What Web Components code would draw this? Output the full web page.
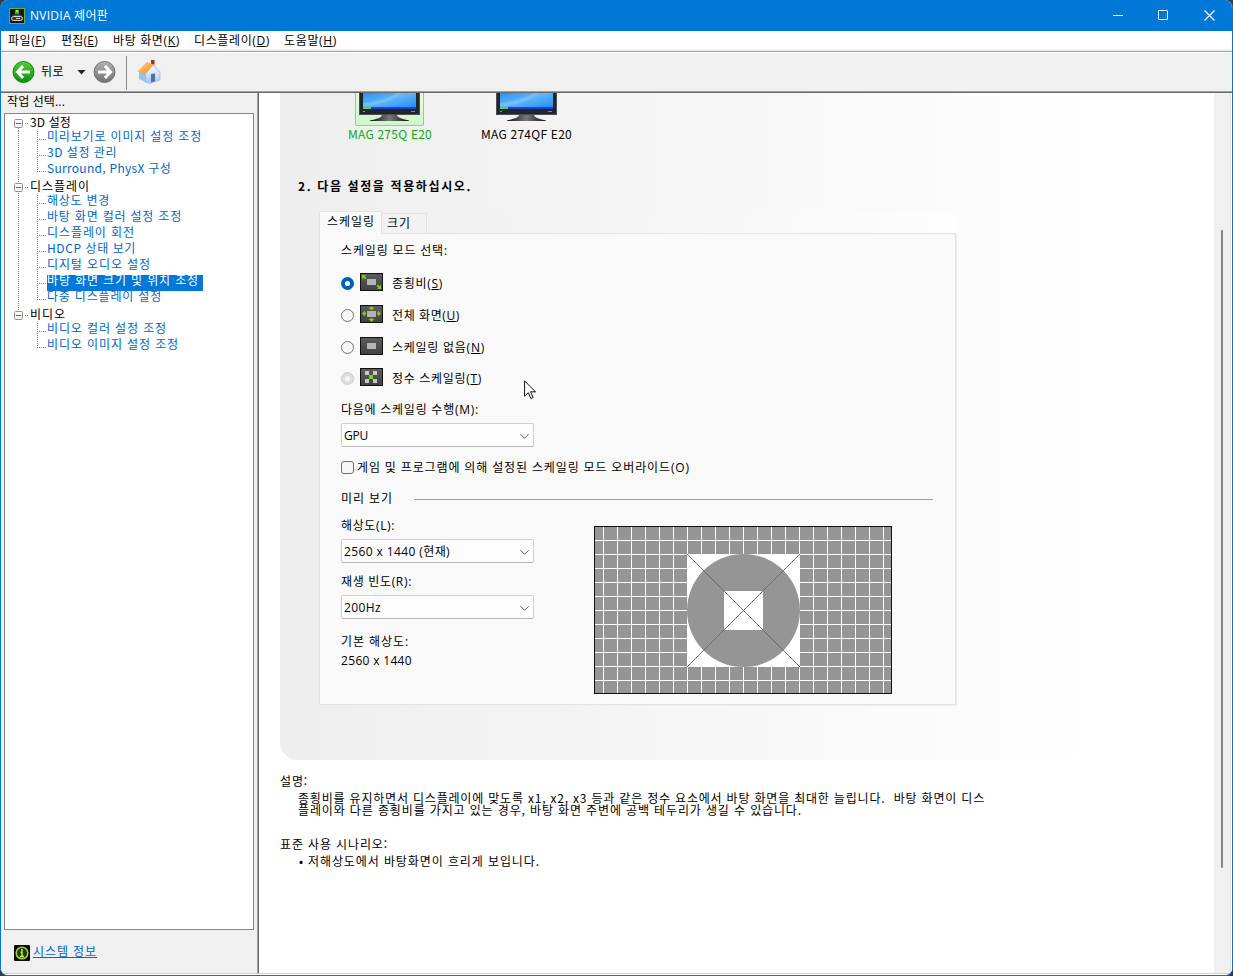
<!DOCTYPE html>
<html lang="ko">
<head>
<meta charset="utf-8">
<title>NVIDIA 제어판</title>
<style>
    html, body {
        margin: 0;
        height: 100%;
        overflow: hidden;
        background: #3a3a3a;
    }
    body {
        font-family: "Open Sans", "Noto Sans CJK KR", sans-serif;
        font-size: 12px;
        line-height: 16px;
        color: #000;
    }
</style>
</head>
<body>
<nv-window>
    <nv-titlebar slot="title"></nv-titlebar>
    <nv-menubar slot="menu"></nv-menubar>
    <nv-toolbar slot="toolbar"></nv-toolbar>
    <nv-sidebar slot="side"></nv-sidebar>
    <nv-content slot="main"></nv-content>
</nv-window>

<script>
class NvElement extends HTMLElement {
    constructor() {
        super();
        this.attachShadow({ mode: 'open' });
    }

    connectedCallback() {
        this.shadowRoot.innerHTML = this.render();
        this.ready();
    }

    render() {
        return '<slot></slot>';
    }

    ready() {}
}

// Text run that is tracked out (or in) to an exact width
class NvText extends NvElement {
    render() {
        return `
            <style>
                :host { display: block; flex: none; }
                span { display: block; width: max-content; white-space: pre; }
                ::slotted(u) { text-underline-offset: 1px; text-decoration-thickness: 1px; }
            </style>
            <span><slot></slot></span>
        `;
    }

    ready() {
        const width = Number(this.getAttribute('w'));
        const span = this.shadowRoot.querySelector('span');
        const natural = span.getBoundingClientRect().width;
        const count = this.textContent.length;
        this.style.width = `${width}px`;
        this.style.letterSpacing = `${(width - natural) / count}px`;
    }
}

class NvWindow extends NvElement {
    render() {
        return `
            <style>
                :host {
                    display: flex;
                    flex-direction: column;
                    box-sizing: border-box;
                    width: 1233px;
                    height: 976px;
                    border: solid #0078d7;
                    border-width: 0 1px 1px;
                    border-radius: 8px;
                    overflow: hidden;
                    background: #f0f0f0;
                }
                .body { display: flex; height: 880px; flex: none; }
                .foot { height: 1px; flex: none; background: #fff; border-top: 1px solid #d0d0d0; }
            </style>
            <slot name="title"></slot>
            <slot name="menu"></slot>
            <slot name="toolbar"></slot>
            <div class="body">
                <slot name="side"></slot>
                <slot name="main"></slot>
            </div>
            <div class="foot"></div>
        `;
    }
}

class NvTitlebar extends NvElement {
    render() {
        return `
            <style>
                :host {
                    display: flex;
                    align-items: center;
                    height: 31px;
                    flex: none;
                    padding-left: 8px;
                    background: #0078d7;
                    color: #fff;
                }
                nv-text { margin-left: 5px; }
                .buttons { display: flex; margin-left: auto; }
                .buttons svg { display: block; margin-right: 35px; }
                .buttons svg:nth-child(2) { margin-right: 36px; }
                .buttons svg:last-child { margin-right: 17px; }
            </style>
            <svg width="16" height="16" viewBox="0 0 16 16">
                <rect x=".5" y=".5" width="15" height="15" fill="#161816" stroke="#76a832"/>
                <path d="M3 8 5 6.500h6L13 8z" fill="#2f6f1a"/>
                <rect x="6" y="2" width="4" height="4" fill="#4cae18"/>
                <rect x="7" y="2" width="2" height="2" fill="#9af04e"/>
                <rect x="2.500" y="8.500" width="11" height="4" rx="2" fill="#3a3e3a" stroke="#d8d8d8"/>
                <path d="M7 10.500h4" stroke="#d0d0d0"/>
            </svg>
            <nv-text w="78">NVIDIA 제어판</nv-text>
            <div class="buttons">
                <svg width="10" height="11"><path d="M0 5.500h10" stroke="#fff"/></svg>
                <svg width="10" height="11"><rect x=".5" y=".5" width="9" height="9" rx=".5" fill="none" stroke="#fff"/></svg>
                <svg width="11" height="11"><path d="m.5 .5 10 10m0-10-10 10" stroke="#fff" stroke-width="1.200"/></svg>
            </div>
        `;
    }
}

class NvMenubar extends NvElement {
    render() {
        const items = [
            ['파일', 'F', 38, 15],
            ['편집', 'E', 37, 15],
            ['바탕 화면', 'K', 67, 14],
            ['디스플레이', 'D', 76, 14],
            ['도움말', 'H', 53, 0]
        ];
        return `
            <style>
                :host {
                    display: flex;
                    box-sizing: border-box;
                    height: 22px;
                    flex: none;
                    padding: 2px 0 0 7px;
                    background: linear-gradient(#fff 18px, #f0f0f0 18px 20px, #a0a0a0 20px 21px, #fff 21px);
                }
            </style>
            ${items.map(([text, key, w, gap]) => `<nv-text w="${w}" style="margin-right: ${gap}px">${text}(<u>${key}</u>)</nv-text>`).join('')}
        `;
    }
}

class NvToolbar extends NvElement {
    arrow(id, light, dark, flip) {
        return `
            <svg width="23" height="23" viewBox="0 0 23 23">
                <defs>
                    <linearGradient id="${id}" x2="0" y2="1">
                        <stop offset="0" stop-color="${light}"/>
                        <stop offset="1" stop-color="${dark}"/>
                    </linearGradient>
                </defs>
                <circle cx="11.500" cy="11" r="10.500" fill="url(#${id})" stroke="${dark}"/>
                <path d="M11 5 5.500 11 11 17M6 11h12" fill="none" stroke="#fff" stroke-width="3"
                    ${flip ? 'transform="matrix(-1 0 0 1 23 0)"' : ''}/>
            </svg>
        `;
    }

    render() {
        return `
            <style>
                :host {
                    display: flex;
                    align-items: center;
                    box-sizing: border-box;
                    height: 40px;
                    flex: none;
                    padding-left: 11px;
                    background: #f0f0f0;
                    border-bottom: 1px solid #696969;
                    box-shadow: inset 0 -1px #a0a0a0;
                }
                svg { display: block; flex: none; }
                nv-text { margin: -2px 0 0 6px; }
                .drop { margin: 0 7px 0 13px; }
                .sep { width: 1px; height: 34px; margin: 0 10px 0 10px; background: #8a8a8a; }
                .home { margin-top: -2px; }
            </style>
            ${this.arrow('back', '#52cf38', '#108c0c', false)}
            <nv-text w="23">뒤로</nv-text>
            <svg class="drop" width="9" height="5"><path d="M.5 0h8l-4 4.500z" fill="#222"/></svg>
            ${this.arrow('next', '#b4b4b4', '#727272', true)}
            <div class="sep"></div>
            <svg class="home" width="24" height="24" viewBox="0 0 24 24">
                <defs>
                    <linearGradient id="roof" x2="1" y2="1">
                        <stop offset="0" stop-color="#ffd27a"/>
                        <stop offset="1" stop-color="#f08a1c"/>
                    </linearGradient>
                    <linearGradient id="wall" x2="0" y2="1">
                        <stop offset="0" stop-color="#fff"/>
                        <stop offset="1" stop-color="#9cc8ee"/>
                    </linearGradient>
                </defs>
                <path d="M14 0h3.500v7H14z" fill="#b02a20"/>
                <path d="m2 12 8 1v10l-8-4z" fill="#8fc4f4"/>
                <path d="M8.500 13.500 16 5l7 8v7l-10 3.500-4.500-1.500z" fill="url(#wall)" stroke="#9dbbe0" stroke-width=".7"/>
                <path d="m14 14 4-.5v7.700L14 22.500z" fill="#5a6f98"/>
                <path d="M.5 11.500 10 2l6.500 2.500L8 14.500z" fill="url(#roof)"/>
                <path d="M16.300 4.500 23.500 13" stroke="#c8d4e8" stroke-width="1.500"/>
            </svg>
        `;
    }
}

class NvTree extends NvElement {
    render() {
        // [label, width, is group, is last child, is selected]
        const rows = [
            ['3D 설정', 41, true],
            ['미리보기로 이미지 설정 조정', 155],
            ['3D 설정 관리', 70],
            ['Surround, PhysX 구성', 124, false, true],
            ['디스플레이', 60, true],
            ['해상도 변경', 63],
            ['바탕 화면 컬러 설정 조정', 135],
            ['디스플레이 회전', 88],
            ['HDCP 상태 보기', 89],
            ['디지털 오디오 설정', 104],
            ['바탕 화면 크기 및 위치 조정', 152, false, false, true],
            ['다중 디스플레이 설정', 115, false, true],
            ['비디오', 36, true],
            ['비디오 컬러 설정 조정', 120],
            ['비디오 이미지 설정 조정', 132, false, true]
        ];
        return `
            <style>
                :host {
                    display: block;
                    box-sizing: border-box;
                    width: 250px;
                    height: 817px;
                    padding-top: 1px;
                    border: 1px solid #828790;
                    background: #fff;
                    font-family: "Noto Sans CJK KR", sans-serif;
                    --dot: #808080;
                }
                .row { display: flex; height: 16px; color: #0066cc; }
                .group { color: #000; }
                .trunk, .twig { flex: none; height: 16px; }
                .trunk {
                    width: 19px;
                    overflow: hidden;
                    background: repeating-linear-gradient(var(--dot) 0 1px, transparent 1px 2px) 13px 0 / 1px 16px no-repeat;
                }
                .row:first-of-type .trunk { background-position: 13px 13px; }
                .last-group .trunk { background-size: 1px 4px; }
                .last-group ~ .row .trunk { background: none; }
                .twig {
                    width: 23px;
                    background:
                        repeating-linear-gradient(var(--dot) 0 1px, transparent 1px 2px) 13px 0 / 1px 16px no-repeat,
                        repeating-linear-gradient(90deg, var(--dot) 0 1px, transparent 1px 2px) 15px 8px / 8px 1px no-repeat;
                }
                .last .twig { background-size: 1px 9px, 8px 1px; }
                .group .twig {
                    width: 6px;
                    background: repeating-linear-gradient(90deg, var(--dot) 0 1px, transparent 1px 2px) 1px 8px / 4px 1px no-repeat;
                }
                .box { display: block; margin: 4px 0 0 9px; }
                .label { height: 16px; padding-right: 4px; }
                .label nv-text { margin-top: -3px; }
                .group .label nv-text { margin-top: -1px; }
                .on .label { background: #0078d7; color: #fff; }
                .on .label, .on + .row .label { overflow: hidden; }
            </style>
            ${rows.map(([text, w, group, last, on], i) => `
                <div class="row ${group ? 'group' : ''} ${last ? 'last' : ''} ${on ? 'on' : ''} ${i === 12 ? 'last-group' : ''}">
                    <div class="trunk">${group ? `
                        <svg class="box" width="9" height="9">
                            <rect x=".5" y=".5" width="8" height="8" rx="1" fill="#f6f6f6" stroke="#919191"/>
                            <path d="M2 4.500h5" stroke="#4b63a7"/>
                        </svg>` : ''}</div>
                    <div class="twig"></div>
                    <div class="label"><nv-text w="${w}">${text}</nv-text></div>
                </div>
            `).join('')}
        `;
    }
}

class NvSidebar extends NvElement {
    render() {
        return `
            <style>
                :host {
                    display: block;
                    width: 258px;
                    box-sizing: border-box;
                    flex: none;
                    border-right: 1px solid #696969;
                    box-shadow: inset -1px 0 #a0a0a0;
                    background: #f0f0f0;
                }
                .head { margin-left: 6px; padding: 1px 0 3px; }
                nv-tree { margin-left: 3px; }
                .info { display: flex; margin: 13px 0 0 12px; color: #0066cc; }
                .info svg { display: block; margin: 2px 3px 0 1px; }
                .link { font-family: "Noto Sans CJK KR", sans-serif; height: 14px; border-bottom: 1px solid #0066cc; }
            </style>
            <nv-text class="head" w="58">작업 선택...</nv-text>
            <nv-tree></nv-tree>
            <div class="info">
                <svg width="16" height="16" viewBox="0 0 16 16">
                    <rect width="16" height="16" rx="1" fill="#0a0c08"/>
                    <circle cx="8" cy="8" r="5.800" fill="#25360a" stroke="#9ad42a" stroke-width="1.600"/>
                    <path d="M8 4v2M6.500 7H8v4M6 11.500h4" stroke="#c6f05a" stroke-width="1.500" fill="none"/>
                </svg>
                <nv-text class="link" w="64">시스템 정보</nv-text>
            </div>
        `;
    }
}

class NvMonitor extends NvElement {
    render() {
        const active = this.hasAttribute('active');
        return `
            <style>
                :host {
                    display: flex;
                    flex-direction: column;
                    align-items: center;
                    color: ${active ? '#12a812' : '#000'};
                    font-family: "Noto Sans CJK KR", sans-serif;
                }
                .frame {
                    box-sizing: border-box;
                    width: 69px;
                    height: 33px;
                    padding-left: 3px;
                    margin-left: -1px;
                    border: 1px solid ${active ? '#8fd08a' : 'transparent'};
                    border-top: 0;
                    border-radius: 0 0 2px 2px;
                    background: ${active ? 'linear-gradient(#e4fbe2, #cdf7cb)' : 'none'};
                }
                svg { display: block; }
            </style>
            <div class="frame">
                <svg width="61" height="30" viewBox="0 0 61 30">
                    <defs>
                        <linearGradient id="sky" x2="1" y2="1">
                            <stop offset="0" stop-color="#2590f0"/>
                            <stop offset=".45" stop-color="#62b6fb"/>
                            <stop offset="1" stop-color="#1d86ee"/>
                        </linearGradient>
                        <linearGradient id="foot" x2="1" y2="0">
                            <stop offset="0" stop-color="#111"/>
                            <stop offset=".5" stop-color="#777"/>
                            <stop offset="1" stop-color="#111"/>
                        </linearGradient>
                    </defs>
                    <rect width="61" height="22" fill="#22252a"/>
                    <path d="M.5 0v21.500h60V0" fill="none" stroke="#4c4f52"/>
                    <rect x="4" width="53" height="16" fill="url(#sky)"/>
                    <path d="M4 10Q25 8 38 0h6Q28 12 4 13z" fill="#9ad2ff" opacity=".35"/>
                    <rect x="4" y="14" width="53" height="2" fill="#1e3fd8"/>
                    <rect x="4" y="14" width="8" height="2" fill="#5fd22a"/>
                    <rect x="4" y="18" width="2" height="1" fill="#35d435"/>
                    <path d="M52 18.500h4" stroke="#888"/>
                    <path d="M23 22h15q0 3 12 5.500v.5H11v-.5Q23 25 23 22" fill="url(#foot)"/>
                </svg>
            </div>
            <slot></slot>
        `;
    }
}

class NvRadio extends NvElement {
    glyph() {
        const green = '#86c80a';
        const glyphs = {
            aspect: `<rect x="7" y="6" width="9" height="6" fill="#b4b4b4"/>
                <path d="M2 2h4L4.800 3.500 6.500 5 5 6.500 3.500 4.800 2 6zM21 16h-4l1.200-1.500L16.500 13 18 11.500l1.500 1.700L21 12z" fill="${green}"/>`,
            full: `<rect x="7" y="6" width="9" height="6" fill="#b4b4b4"/>
                <path d="m11.500 1 3 3h-2v1h-2V4h-2zM11.500 17l3-3h-2v-1h-2v1h-2zM2 8.500l3-3v2h1v2H5v2zM21 8.500l-3-3v2h-1v2h1v2z" fill="${green}"/>`,
            none: '<rect x="7" y="6" width="9" height="6" fill="#b4b4b4"/>',
            integer: `<path d="M5 3h4v4H5zM13 3h4v4h-4zM5 11h4v4H5zM13 11h4v4h-4z" fill="#c8c8c8"/>
                <rect x="9" y="7" width="4" height="4" fill="#76d900"/>`
        };
        return glyphs[this.getAttribute('icon')];
    }

    render() {
        const state = this.getAttribute('state');
        const dots = {
            on: '<circle cx="6.500" cy="6.500" r="6.500" fill="#005fb8"/><circle cx="6.500" cy="6.500" r="2.600" fill="#fff"/>',
            off: '<circle cx="6.500" cy="6.500" r="6" fill="#f6f6f6" stroke="#767676"/>',
            disabled: '<circle cx="6.500" cy="6.500" r="6" fill="#dedede" stroke="#cacaca"/><circle cx="6.500" cy="6.500" r="2.600" fill="#f6f6f6"/>'
        };
        return `
            <style>
                :host { display: flex; align-items: center; height: 18px; }
                .dot { margin: 3px 6px 0 0; }
                svg { display: block; flex: none; }
                ::slotted(nv-text) { margin: 4px 0 0 9px; }
            </style>
            <svg class="dot" width="13" height="13">${dots[state]}</svg>
            <svg width="23" height="18" viewBox="0 0 23 18">
                <defs>
                    <linearGradient id="g" x2="0" y2="1">
                        <stop offset="0" stop-color="#5c5c5c"/>
                        <stop offset="1" stop-color="#414141"/>
                    </linearGradient>
                </defs>
                <rect x=".5" y=".5" width="22" height="17" fill="url(#g)" stroke="#111"/>
                ${this.glyph()}
            </svg>
            <slot></slot>
        `;
    }
}

class NvSelect extends NvElement {
    render() {
        return `
            <style>
                :host {
                    display: flex;
                    align-items: center;
                    justify-content: space-between;
                    box-sizing: border-box;
                    width: 193px;
                    height: 24px;
                    padding: 2px 4px 0 2px;
                    border: 1px solid #d0d0d0;
                    border-bottom-color: #b8b8b8;
                    border-radius: 2px;
                    background: #fdfdfd;
                }
            </style>
            <slot></slot>
            <svg width="9" height="5"><path d="m.5 .3 4 4 4-4" fill="none" stroke="#555"/></svg>
        `;
    }
}

class NvPreview extends NvElement {
    render() {
        return `
            <style>
                :host { display: block; width: 298px; height: 168px; }
                svg { display: block; }
            </style>
            <svg width="298" height="168" viewBox="0 0 298 168">
                <defs>
                    <pattern id="grid" x="9" y="0" width="14" height="14" patternUnits="userSpaceOnUse">
                        <path d="M0 0h14v1H0zM0 0h1v14H0z" fill="#fff"/>
                    </pattern>
                </defs>
                <rect width="298" height="168" fill="#959595"/>
                <rect width="298" height="168" fill="url(#grid)"/>
                <rect x="93" y="28" width="113" height="113" fill="#fff"/>
                <circle cx="149.500" cy="84.500" r="56.500" fill="#959595"/>
                <rect x="130" y="65" width="39" height="39" fill="#fff"/>
                <path d="m93 28 113 113M206 28 93 141" stroke="#666" stroke-width=".9"/>
                <rect x=".5" y=".5" width="297" height="167" fill="none" stroke="#111"/>
            </svg>
        `;
    }
}

class NvTabs extends NvElement {
    render() {
        return `
            <style>
                :host { display: block; width: 637px; }
                .strip {
                    display: flex;
                    align-items: flex-end;
                    height: 22px;
                    width: 638px;
                    background: linear-gradient(90deg, #f0f0f0 100px, #fdfdfd);
                }
                .tab {
                    box-sizing: border-box;
                    border: 1px solid #e2e2e2;
                    border-bottom: 0;
                }
                .tab.on { width: 63px; height: 23px; padding: 2px 0 0 7px; margin-bottom: -1px; background: #f9f9f9; border-radius: 2px 2px 0 0; position: relative; }
                .tab.off { width: 45px; height: 20px; padding: 2px 0 0 5px; background: #f2f2f2; border-left: 0; }
                .page {
                    box-sizing: border-box;
                    height: 472px;
                    padding: 9px 0 0 21px;
                    border: 1px solid #e2e2e2;
                    box-shadow: 1px 1px #efefef;
                    background: #f9f9f9;
                }
            </style>
            <div class="strip">
                <div class="tab on"><nv-text w="48">스케일링</nv-text></div>
                <div class="tab off"><nv-text w="24">크기</nv-text></div>
            </div>
            <div class="page"><slot></slot></div>
        `;
    }
}

class NvScaling extends NvElement {
    render() {
        return `
            <style>
                :host { display: block; }
                .modes { display: grid; row-gap: 14px; margin: 14px 0 16px; }
                .modes nv-radio:last-child { margin-top: -1px; }
                nv-select { margin-top: 5px; }
                .check { display: flex; align-items: center; margin-top: 13px; }
                .check i {
                    box-sizing: border-box;
                    width: 13px;
                    height: 13px;
                    margin: 0 3px 1px 0;
                    border: 1px solid #707070;
                    border-radius: 3px;
                    background: #f6f6f6;
                }
                .section { display: flex; align-items: center; margin-top: 15px; }
                .section hr { width: 519px; height: 1px; margin: 1px 0 0 21px; border: 0; background: #a0a0a0; }
                .columns { display: flex; align-items: flex-start; gap: 60px; }
                .left { width: 193px; padding-top: 11px; }
                .columns nv-preview { margin-top: 19px; }
                .second { margin-top: 11px; }
                .native { margin-top: 15px; }
                .value { margin-top: 3px; }
            </style>
            <nv-text w="107">스케일링 모드 선택:</nv-text>
            <div class="modes">
                <nv-radio state="on" icon="aspect"><nv-text w="51">종횡비(<u>S</u>)</nv-text></nv-radio>
                <nv-radio state="off" icon="full"><nv-text w="68">전체 화면(<u>U</u>)</nv-text></nv-radio>
                <nv-radio state="off" icon="none"><nv-text w="93">스케일링 없음(<u>N</u>)</nv-text></nv-radio>
                <nv-radio state="disabled" icon="integer"><nv-text w="90">정수 스케일링(<u>T</u>)</nv-text></nv-radio>
            </div>
            <nv-text w="138">다음에 스케일링 수행(M):</nv-text>
            <nv-select><nv-text w="24">GPU</nv-text></nv-select>
            <div class="check"><i></i><nv-text w="333">게임 및 프로그램에 의해 설정된 스케일링 모드 오버라이드(O)</nv-text></div>
            <div class="section"><nv-text w="52">미리 보기</nv-text><hr></div>
            <div class="columns">
                <div class="left">
                    <nv-text w="54">해상도(L):</nv-text>
                    <nv-select><nv-text w="106">2560 x 1440 (현재)</nv-text></nv-select>
                    <nv-text class="second" w="71">재생 빈도(R):</nv-text>
                    <nv-select><nv-text w="37">200Hz</nv-text></nv-select>
                    <nv-text class="native" w="68">기본 해상도:</nv-text>
                    <nv-text class="value" w="71">2560 x 1440</nv-text>
                </div>
                <nv-preview></nv-preview>
            </div>
        `;
    }
}

class NvContent extends NvElement {
    render() {
        return `
            <style>
                :host {
                    display: flex;
                    flex: 1;
                    background: #fff;
                    border-right: 1px solid #fff;
                    box-shadow: inset -1px 0 #e3e3e3;
                    padding-right: 1px;
                }
                .page { flex: 1; padding-left: 21px; font-family: "Noto Sans CJK KR", sans-serif; }
                .card {
                    box-sizing: border-box;
                    width: 800px;
                    height: 667px;
                    border-radius: 0 0 18px 18px;
                    background: linear-gradient(90deg, #eeeeee, #fefefe);
                }
                .monitors { display: flex; height: 49px; gap: 49px; padding-left: 68px; }
                .step { margin: 36px 0 17px 18px; font-weight: bold; }
                nv-tabs { margin-left: 39px; font-family: "Open Sans", "Noto Sans CJK KR", sans-serif; }
                .title { margin-top: 13px; }
                .para { margin: 3px 0 20px 18px; line-height: 12px; }
                .bullet { display: flex; gap: 4px; margin: 1px 0 0 19px; }
                .track { width: 16px; background: #f0f0f0; }
                .thumb { width: 2px; height: 638px; margin: 137px 0 0 7px; border-radius: 1px; background: #858585; }
                .cursor { position: absolute; left: 524px; top: 380px; }
            </style>
            <div class="page">
                <div class="card">
                    <div class="monitors">
                        <nv-monitor active><nv-text w="84">MAG 275Q E20</nv-text></nv-monitor>
                        <nv-monitor><nv-text w="91">MAG 274QF E20</nv-text></nv-monitor>
                    </div>
                    <nv-text class="step" w="174">2. 다음 설정을 적용하십시오.</nv-text>
                    <nv-tabs><nv-scaling></nv-scaling></nv-tabs>
                </div>
                <nv-text class="title" w="28">설명:</nv-text>
                <div class="para">
                    <nv-text w="687">종횡비를 유지하면서 디스플레이에 맞도록 x1, x2, x3 등과 같은 정수 요소에서 바탕 화면을 최대한 늘립니다.  바탕 화면이 디스</nv-text>
                    <nv-text w="504">플레이와 다른 종횡비를 가지고 있는 경우, 바탕 화면 주변에 공백 테두리가 생길 수 있습니다.</nv-text>
                </div>
                <nv-text w="108">표준 사용 시나리오:</nv-text>
                <div class="bullet"><nv-text w="5">•</nv-text><nv-text w="232">저해상도에서 바탕화면이 흐리게 보입니다.</nv-text></div>
            </div>
            <div class="track"><div class="thumb"></div></div>
            <svg class="cursor" width="13" height="20" viewBox="0 0 13 20">
                <path d="M.6 1v15.200l3.700-3.500 2.500 5.800 2.300-1-2.500-5.700h5z" fill="#fff" stroke="#111"/>
            </svg>
        `;
    }
}

customElements.define('nv-text', NvText);
customElements.define('nv-monitor', NvMonitor);
customElements.define('nv-radio', NvRadio);
customElements.define('nv-select', NvSelect);
customElements.define('nv-preview', NvPreview);
customElements.define('nv-tabs', NvTabs);
customElements.define('nv-scaling', NvScaling);
customElements.define('nv-tree', NvTree);
customElements.define('nv-window', NvWindow);
customElements.define('nv-titlebar', NvTitlebar);
customElements.define('nv-menubar', NvMenubar);
customElements.define('nv-toolbar', NvToolbar);
customElements.define('nv-sidebar', NvSidebar);
customElements.define('nv-content', NvContent);
</script>
</body>
</html>
